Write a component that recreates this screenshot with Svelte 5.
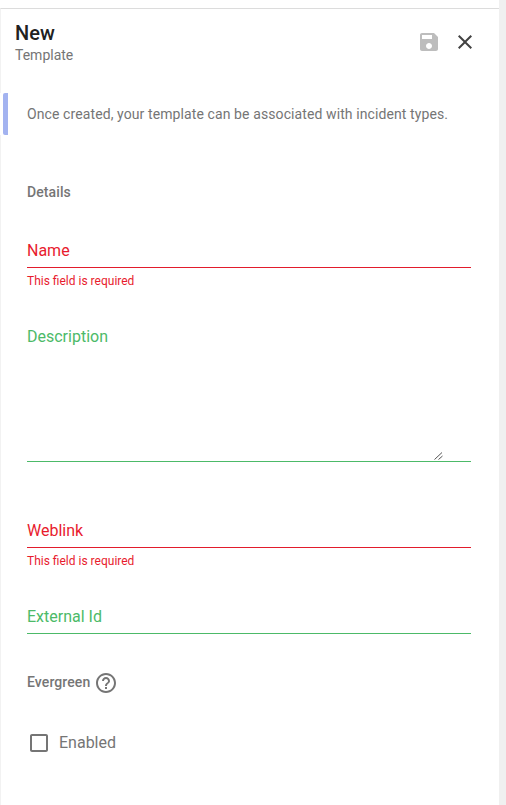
<script>
  const required = 'This field is required';
</script>

<div class="page">
  <div class="panel">
    <header>
      <div class="titles">
        <h1>New</h1>
        <p>Template</p>
      </div>
      <button class="icon" aria-label="Save" disabled>
        <svg width="24" height="24" viewBox="0 0 24 24" fill="#bdbdbd"><path d="M17 3H5c-1.110 0-2 .9-2 2v14c0 1.100.890 2 2 2h14c1.100 0 2-.9 2-2V7l-4-4zm-5 16c-1.660 0-3-1.340-3-3s1.340-3 3-3 3 1.340 3 3-1.340 3-3 3zm3-10H5V5h10v4z" /></svg>
      </button>
      <button class="icon" aria-label="Close">
        <svg width="24" height="24" viewBox="0 0 24 24" fill="#424242"><path d="M19 6.410 17.590 5 12 10.590 6.410 5 5 6.410 10.590 12 5 17.590 6.410 19 12 13.410 17.590 19 19 17.590 13.410 12z" /></svg>
      </button>
    </header>

    <div class="notice">Once created, your template can be associated with incident types.</div>

    <form>
      <h2>Details</h2>
      <div class="field invalid"><span class="label">Name</span></div>
      <div class="error">{required}</div>
      <div class="field area">
        <span class="label">Description</span>
        <svg class="grip" width="9" height="8" viewBox="0 0 9 8" fill="none" stroke="#555" stroke-width="1"><path d="M.5 7.500 8 .5M4.500 7.500 8.500 4" /></svg>
      </div>
      <div class="field invalid weblink"><span class="label">Weblink</span></div>
      <div class="error">{required}</div>
      <div class="field external"><span class="label">External Id</span></div>
      <h2 class="evergreen">
        <span>Evergreen</span>
        <svg width="24" height="24" viewBox="0 0 24 24" fill="#757575"><path d="M11 18h2v-2h-2v2zm1-16C6.480 2 2 6.480 2 12s4.480 10 10 10 10-4.480 10-10S17.520 2 12 2zm0 18c-4.410 0-8-3.590-8-8s3.590-8 8-8 8 3.590 8 8-3.590 8-8 8zm0-14c-2.210 0-4 1.790-4 4h2c0-1.100.9-2 2-2s2 .9 2 2c0 2-3 1.750-3 5h2c0-2.250 3-2.500 3-5 0-2.210-1.790-4-4-4z" /></svg>
      </h2>
      <div class="check">
        <svg width="24" height="24" viewBox="0 0 24 24" fill="#757575"><path d="M19 5v14H5V5h14m0-2H5c-1.100 0-2 .9-2 2v14c0 1.100.9 2 2 2h14c1.100 0 2-.9 2-2V5c0-1.100-.9-2-2-2z" /></svg>
        <span>Enabled</span>
      </div>
    </form>
  </div>
  <div class="gutter"></div>
</div>

<style>
  .page {
    display: flex;
    width: 506px;
    height: 805px;
    overflow: hidden;
    background: #fff;
    font-family: Roboto, sans-serif;
    color: #757575;
  }
  .panel {
    box-sizing: border-box;
    width: 499px;
    padding-top: 8px;
  }
  .gutter {
    width: 7px;
    background: #f0f0f0;
  }
  header {
    box-sizing: border-box;
    display: flex;
    height: 85px;
    padding: 12px 22px 0 14px;
    border-top: 1px solid #dcdcdc;
    border-left: 1px solid #f2f2f2;
  }
  .titles {
    flex: 1;
  }
  h1 {
    margin: 0;
    font-size: 20px;
    line-height: 24px;
    font-weight: 500;
    color: #212121;
  }
  p {
    margin: 1px 0 0;
    font-size: 14px;
    line-height: 18px;
  }
  .icon {
    width: 24px;
    height: 24px;
    margin: 9px 0 0 12px;
    padding: 0;
    border: 0;
    background: none;
  }
  .icon svg {
    display: block;
  }
  .notice {
    box-sizing: border-box;
    height: 42px;
    margin-left: 3px;
    padding-left: 19px;
    border-left: 5px solid #a3b3f0;
    border-radius: 2px;
    font-size: 14px;
    line-height: 42px;
    letter-spacing: 0.1px;
  }
  form {
    box-sizing: border-box;
    height: 670px;
    padding: 49px 28px 0 26px;
    border-left: 1px solid #f2f2f2;
  }
  h2 {
    margin: 0;
    font-size: 14px;
    line-height: 16px;
    font-weight: 500;
    letter-spacing: 0.1px;
  }
  .field {
    box-sizing: border-box;
    display: flex;
    justify-content: space-between;
    height: 28px;
    border-bottom: 1px solid #4cba68;
    color: #4cba68;
    font-size: 16px;
    line-height: 22px;
  }
  .invalid {
    margin-top: 40px;
    border-color: #e21c2c;
    color: #e81b2e;
  }
  .error {
    height: 14px;
    margin-top: 6px;
    color: #e81b2e;
    font-size: 12px;
    line-height: 14px;
  }
  .area {
    height: 136px;
    margin-top: 38px;
  }
  .grip {
    align-self: flex-end;
    margin: 0 28px 1px 0;
  }
  .weblink {
    margin-top: 58px;
  }
  .external {
    margin-top: 38px;
  }
  .evergreen {
    display: flex;
    align-items: center;
    gap: 4px;
    height: 24px;
    margin-top: 37px;
  }
  .evergreen span,
  .check span {
    padding-bottom: 2px;
  }
  .check {
    display: flex;
    align-items: center;
    gap: 8px;
    height: 24px;
    margin-top: 36px;
    font-size: 16px;
  }
</style>
